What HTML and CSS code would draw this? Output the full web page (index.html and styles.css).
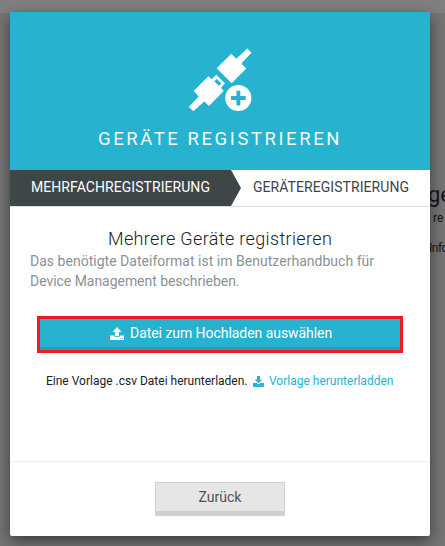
FILE: index.html
```html
<!DOCTYPE html>
<html lang="de">
<head>
<meta charset="utf-8">
<title>Geräte registrieren</title>
<link rel="stylesheet" href="styles.css">
</head>
<body>
<div class="backdrop">
  <span class="behind behind-title">ge</span>
  <span class="behind behind-sub">re</span>
  <span class="behind behind-info">Info</span>
</div>
<main class="modal">
  <header class="head">
    <svg class="plug" width="66" height="66" viewBox="0 0 66 66" fill="#fff">
      <path d="M27.700 15.300 42.300.7 47.300 5.700 58.300-4.500 62.500-.3 53 9.700V11.300L57.300 15.500 42.700 30.300Z"/>
      <path fill-rule="evenodd" d="M-.2 53.700 9.700 43.500 4.700 38 19.300 23.300 22.700 26.200 27.200 21.700 36 30.300 32 34.700 34.700 38 20 53 15.200 48.500 4.300 58.200Z M25.300 28.300 27.700 26 32.300 30.300 30 33Z"/>
      <circle cx="49.300" cy="45" r="13.100"/>
      <path d="M47.400 37.700h3.900v5.400h5.400v3.900h-5.400v5.400h-3.900V47H42v-3.900h5.400z" fill="#27b2cf"/>
    </svg>
    <h1 class="title">GERÄTE REGISTRIEREN</h1>
  </header>
  <nav class="steps">
    <div class="step step-active"><span class="step-one">MEHRFACHREGISTRIERUNG</span></div>
    <div class="step"><span class="step-two">GERÄTEREGISTRIERUNG</span></div>
  </nav>
  <section class="body">
    <h2 class="heading">Mehrere Geräte registrieren</h2>
    <p class="desc"><span class="desc-a">Das benötigte Dateiformat ist im Benutzerhandbuch für</span><br><span class="desc-b">Device Management beschrieben.</span></p>
    <button class="upload">
      <svg width="14" height="13" viewBox="0 0 14 13" fill="#fff"><path d="M7 0 11.500 5H9V9H5V5H2.500zM0 8.500h4.200v1.300h5.600V8.500H14V13H0z"/><path d="M10 11h.8v.8H10zM12 11h.8v.8H12z" fill="#27b2cf"/></svg>
      <span class="upload-text">Datei zum Hochladen auswählen</span>
    </button>
    <p class="template"><span class="template-text">Eine Vorlage .csv Datei herunterladen.</span>
      <a class="link"><svg width="11" height="11" viewBox="0 0 11 11" fill="#27b2cf"><path d="M4 0h3v3.500h2.300L5.500 7.300 1.700 3.500H4zM0 7h3.700L5.500 8.500 7.300 7H11v4H0z"/><path d="M7.700 9.200h.6v.6h-.6zM9.300 9.200h.6v.6h-.6z" fill="#fff"/></svg><span class="link-text">Vorlage herunterladden</span></a></p>
  </section>
  <footer class="foot"><button class="back">Zurück</button></footer>
</main>
</body>
</html>
```
FILE: styles.css
```css
* { box-sizing: border-box; }
body { margin: 0; width: 445px; height: 546px; overflow: hidden; background: #757575; font-family: Roboto, "Open Sans", sans-serif; padding: 12px 15px 10px 10px; }
h1, h2, p { margin: 0; font-weight: 400; }
svg { display: block; flex: none; overflow: visible; }
span { white-space: nowrap; }
button { font-family: inherit; margin: 0; }
.backdrop { position: absolute; inset: 0; overflow: hidden; background: linear-gradient(#808080 13px, #757575 13px); }
.behind { position: absolute; color: #161616; }
.behind-title { left: 428px; top: 181px; font-size: 22px; line-height: 28px; }
.behind-sub { left: 433px; top: 210px; font-size: 12px; line-height: 16px; }
.behind-info { left: 429px; top: 240px; font-size: 12px; line-height: 16px; letter-spacing: -.5px; }
.modal { position: relative; width: 420px; height: 524px; background: #fff; box-shadow: 0 5px 15px rgba(0,0,0,.5); display: flex; flex-direction: column; border-radius: 0 0 2px 2px; overflow: hidden; }
.head { height: 158px; background: #27b2cf; padding: 41px 0 0 179px; }
.title { margin: 9px 0 0 -91px; font-size: 18.500px; line-height: 23px; font-weight: 400; letter-spacing: 2.570px; color: #f0fafc; white-space: nowrap; }
.steps { height: 37px; display: flex; border-bottom: 1px solid #dedede; color: #3e4648; font-size: 14px; line-height: 35px; }
.step-active { width: 231px; padding-left: 21px; background: #3e4648; color: #fff; clip-path: polygon(0 0, 221px 0, 231px 50%, 221px 100%, 0 100%); }
.step + .step { padding-left: 12px; }
.step-one, .step-two { letter-spacing: .06px; }
.body { height: 255px; padding-top: 21px; border-bottom: 1px solid #eee; }
.heading { padding-left: 98px; font-size: 18px; line-height: 22px; margin-bottom: 1px; font-weight: 300; letter-spacing: .35px; color: #222; white-space: nowrap; }
.desc { padding-left: 20px; font-size: 14px; line-height: 20px; color: #899395; }
.desc-a { letter-spacing: .02px; }
.desc-b { letter-spacing: -.04px; }
.upload { width: 366px; height: 37px; margin: 25px 0 0 27px; padding: 0 0 3px 70px; border: 3px solid #ed1c24; background: #27b2cf; box-shadow: inset 0 -3px #239fba; display: flex; align-items: center; color: #fff; font-size: 14px; }
.upload-text { margin-left: 6px; letter-spacing: -.05px; }
.template { display: flex; align-items: center; margin: 20px 0 0 36px; height: 16px; font-size: 12px; line-height: 16px; color: #222; }
.template-text { width: 207px; }
.link { display: flex; align-items: center; color: #27b2cf; }
.link-text { margin-left: 5px; }
.foot { padding: 20px 0 0 145px; }
.back { display: block; width: 130px; height: 34px; padding: 0 0 4px; border: 1px solid #d2d2d2; background: #e6e6e6; box-shadow: inset 0 -4px #cecece; color: #4b5558; font-size: 14px; }
```
